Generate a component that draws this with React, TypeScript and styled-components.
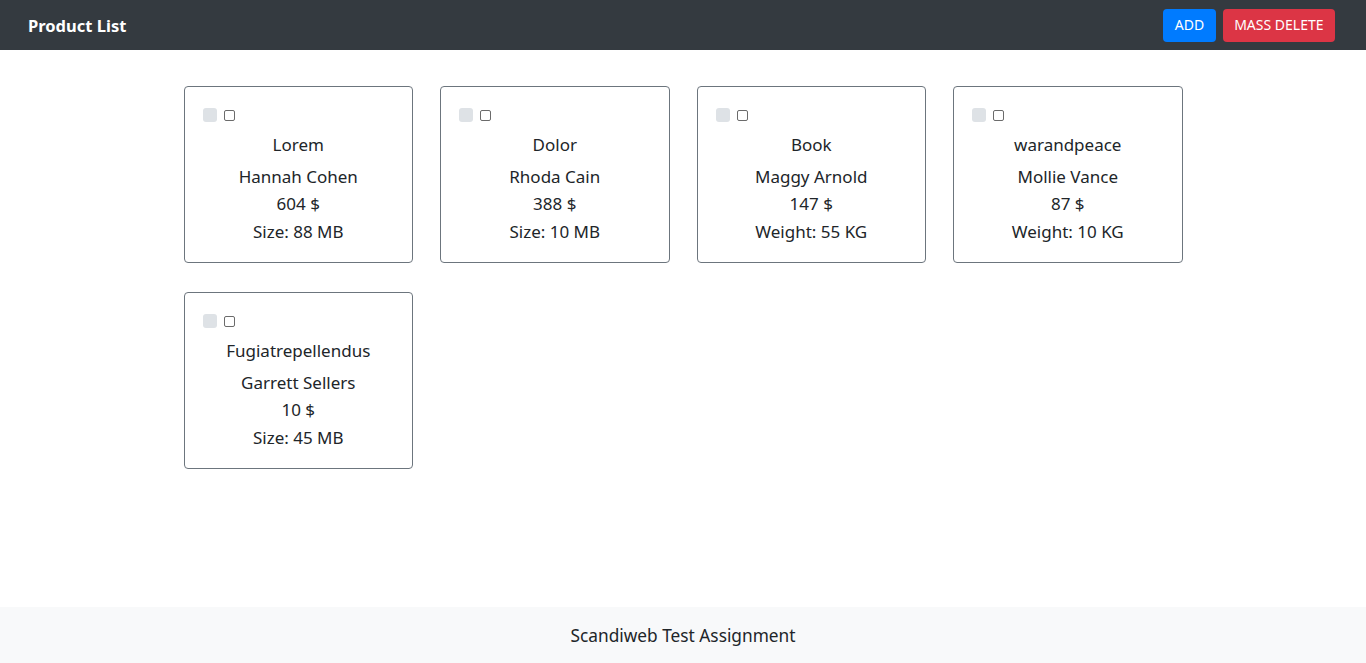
import React from "react";
import styled, { createGlobalStyle } from "styled-components";

const GlobalStyle = createGlobalStyle`
  html, body { margin: 0; padding: 0; }
  body {
    font-family: "Noto Sans", "Open Sans", sans-serif;
    color: #212529;
    background: #fff;
  }
  * { box-sizing: border-box; }
`;

const Page = styled.div`
  display: flex;
  flex-direction: column;
  height: 663px;
`;

const NavBar = styled.header`
  height: 50px;
  background: #343a40;
  display: flex;
  align-items: center;
  justify-content: space-between;
  padding: 0 31px 0 28px;
`;

const Brand = styled.h1`
  margin: 0;
  color: #fff;
  font-size: 16.5px;
  font-weight: 700;
`;

const Actions = styled.div`
  display: flex;
  gap: 7px;
  align-items: center;
`;

const Button = styled.button<{ $variant: "primary" | "danger" }>`
  height: 33px;
  padding: 0 11.5px;
  border: none;
  border-radius: 4px;
  color: #fff;
  font-family: inherit;
  font-size: 14px;
  line-height: 1;
  padding-bottom: 1px;
  background: ${(p) => (p.$variant === "primary" ? "#007bff" : "#dc3545")};
  cursor: pointer;
`;

const Main = styled.main`
  flex: 1;
  padding-top: 36px;
`;

const Grid = styled.div`
  display: grid;
  grid-template-columns: repeat(4, 229.5px);
  column-gap: 27px;
  row-gap: 29px;
  justify-content: center;
`;

const Card = styled.div`
  border: 1px solid #6c757d;
  border-radius: 4px;
  height: 177px;
  padding: 21px 18px 0;
  display: flex;
  flex-direction: column;
  align-items: center;
  text-align: center;
`;

const CheckRow = styled.div`
  align-self: flex-start;
  display: flex;
  align-items: center;
  gap: 7px;
  height: 14px;
  margin-bottom: 9px;
`;

const DisabledBox = styled.span`
  width: 14px;
  height: 14px;
  border-radius: 3px;
  background: #dee2e6;
  display: block;
`;

const SmallBox = styled.span`
  width: 11px;
  height: 11px;
  border-radius: 2px;
  border: 1px solid #6b6b6b;
  background: #fff;
  display: block;
`;

const Title = styled.div`
  font-size: 17px;
  line-height: 27px;
  margin-bottom: 5px;
`;

const Line = styled.div`
  font-size: 17px;
  line-height: 27px;
  & + & { margin-top: 0; }
  &:last-child { margin-top: 1px; }
`;

const Footer = styled.footer`
  height: 56px;
  background: #f8f9fa;
  display: flex;
  align-items: center;
  justify-content: center;
  font-size: 17.3px;
`;

const products = [
  { sku: "Lorem", name: "Hannah Cohen", price: "604 $", attr: "Size: 88 MB" },
  { sku: "Dolor", name: "Rhoda Cain", price: "388 $", attr: "Size: 10 MB" },
  { sku: "Book", name: "Maggy Arnold", price: "147 $", attr: "Weight: 55 KG" },
  { sku: "warandpeace", name: "Mollie Vance", price: "87 $", attr: "Weight: 10 KG" },
  { sku: "Fugiatrepellendus", name: "Garrett Sellers", price: "10 $", attr: "Size: 45 MB" },
];

export default function App() {
  return (
    <Page>
      <GlobalStyle />
      <NavBar>
        <Brand>Product List</Brand>
        <Actions>
          <Button $variant="primary">ADD</Button>
          <Button $variant="danger">MASS DELETE</Button>
        </Actions>
      </NavBar>
      <Main>
        <Grid>
          {products.map((p) => (
            <Card key={p.sku}>
              <CheckRow>
                <DisabledBox />
                <SmallBox />
              </CheckRow>
              <Title>{p.sku}</Title>
              <Line>{p.name}</Line>
              <Line>{p.price}</Line>
              <Line>{p.attr}</Line>
            </Card>
          ))}
        </Grid>
      </Main>
      <Footer>Scandiweb Test Assignment</Footer>
    </Page>
  );
}
